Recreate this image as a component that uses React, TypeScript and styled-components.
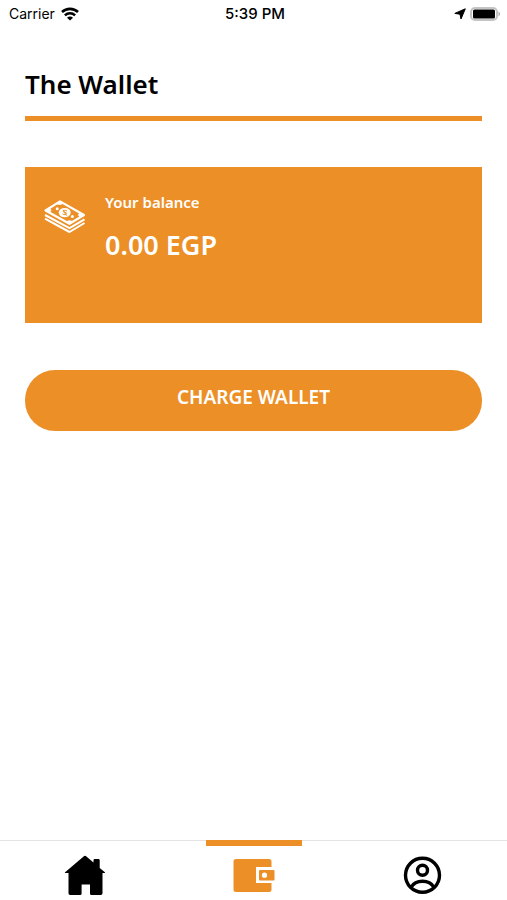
import React from "react";
import styled, { createGlobalStyle } from "styled-components";

const orange = "#ec8f27";

const GlobalStyle = createGlobalStyle`
  *, *::before, *::after { box-sizing: border-box; }
  body {
    margin: 0;
    background: #fff;
    color: #000;
    font-family: "Noto Sans", "Open Sans", sans-serif;
  }
`;

const Screen = styled.div`
  min-height: 100vh;
  display: flex;
  flex-direction: column;
`;

const StatusBar = styled.header`
  display: grid;
  grid-template-columns: 1fr auto 1fr;
  align-items: center;
  height: 28px;
  padding: 0 6px 0 9px;
  font: 400 14px/20px Inter, "Liberation Sans", sans-serif;
`;

const StatusGroup = styled.div<{ $end?: boolean }>`
  display: flex;
  align-items: center;
  gap: ${(p) => (p.$end ? 4 : 6)}px;
  justify-content: ${(p) => (p.$end ? "flex-end" : "flex-start")};
`;

const Clock = styled.time`
  font-size: 15px;
  font-weight: 500;
`;

const Content = styled.main`
  flex: 1;
  display: flex;
  flex-direction: column;
  padding: 36px 25px;
`;

const Title = styled.h1`
  margin: 0;
  padding-bottom: 12px;
  border-bottom: 5px solid ${orange};
  font-size: 26px;
  line-height: 40px;
  font-weight: 600;
`;

const BalanceCard = styled.section`
  display: flex;
  align-items: flex-start;
  gap: 18px;
  min-height: 156px;
  margin-top: 46px;
  padding: 24px 18px;
  background: ${orange};
  color: #fff;
`;

const CashIcon = styled.svg`
  flex: none;
  margin-top: 8px;
`;

const BalanceLabel = styled.p`
  margin: 0;
  font-size: 15px;
  line-height: 22px;
  font-weight: 600;
`;

const BalanceAmount = styled.p`
  margin: 12px 0 0;
  font-size: 27px;
  line-height: 40px;
  font-weight: 600;
`;

const ChargeButton = styled.button`
  height: 61px;
  margin-top: 47px;
  padding: 0 20px 8px;
  border: 0;
  border-radius: 30px;
  background: ${orange};
  color: #fff;
  font: inherit;
  font-size: 19px;
  line-height: 28px;
  font-weight: 600;
  cursor: pointer;
`;

const TabBar = styled.nav`
  display: grid;
  grid-template-columns: repeat(3, 1fr);
  height: 60px;
`;

const Tab = styled.a<{ $active?: boolean }>`
  display: flex;
  flex-direction: column;
  align-items: center;
  border-top: 1px solid #e4e4e4;
  color: ${(p) => (p.$active ? orange : "#000")};

  &::before {
    content: "";
    width: 96px;
    height: 6px;
    margin-top: -1px;
    margin-bottom: 8px;
    background: ${orange};
    visibility: ${(p) => (p.$active ? "visible" : "hidden")};
  }
`;

const Wifi = () => (
  <svg width="18" height="14" viewBox="0 0 18 14" fill="none" stroke="#000" strokeWidth="2.6" role="img" aria-label="Wi-Fi">
    <path d="M1 5C5.4.8 12.6.8 17 5M3.9 8.4c2.9-2.8 7.3-2.8 10.2 0" />
    <path d="M9 13.5 6 10.7c1.6-1.5 4.4-1.5 6 0z" fill="#000" stroke="none" />
  </svg>
);

const LocationArrow = () => (
  <svg width="12" height="12" viewBox="0 0 12 12" role="img" aria-label="Location">
    <path d="M11.3.8 7 11 6 6.2.8 5.4z" stroke="#000" strokeLinejoin="round" />
  </svg>
);

const Battery = () => (
  <svg width="31" height="14" viewBox="0 0 31 14" role="img" aria-label="Battery full">
    <rect x="1" y="1" width="26" height="12" rx="4" fill="#fff" stroke="#c4c4c4" strokeWidth="2" />
    <rect x="3" y="2.5" width="22" height="9" rx="1.5" />
    <path d="M28.5 4.8c2 .7 2 3.7 0 4.4z" fill="#aaa" />
  </svg>
);

const Cash = () => (
  <CashIcon width="44" height="36" viewBox="0 0 44 36" fill="none" stroke="#fff" aria-hidden="true">
    <path d="M2.5 11.5 17 2.4 41 16 26.5 24.8z" strokeWidth="2.2" strokeLinejoin="round" />
    <path d="M2 16 26.5 29.2 41.5 20.3M2 19.7 26.5 33 41.5 24" strokeWidth="2" strokeLinejoin="round" />
    <path d="m2.5 11.5 4-2.4q3 2.2-.2 4.4zM17 2.4l-4 2.4q4 1.5 7.5-.4zM41 16l-4-2.2q-3 2 .2 4.4zM26.5 24.8l-3.8-2.1q3.8-2 7.6 0z" fill="#fff" strokeWidth=".8" />
    <ellipse cx="21.7" cy="13.6" rx="6" ry="4.7" fill="#fff" stroke="none" />
    <path d="M24 12c-1.6-1.3-4.2-.7-3.8.5.4 1.3 3.6.5 3.4 2.1-.2 1.3-2.8 1.4-4 .3M20 10.7l3.5 6" stroke={orange} strokeWidth="1" />
    <circle cx="14.2" cy="9.8" r="1.5" fill="#fff" stroke="none" />
    <circle cx="29.4" cy="17.6" r="1.5" fill="#fff" stroke="none" />
  </CashIcon>
);

const Home = () => (
  <svg width="42" height="42" viewBox="0 0 42 42" fill="currentColor" aria-hidden="true">
    <path d="M19.6 2.4q1.4-1.2 2.8 0l7.1 6.2V6.2q0-1.2 1.2-1.2h3.8q1.2 0 1.2 1.2v7.7l5.2 4.4q.8.8-.3.8h-2.1v20.2q0 1.7-1.7 1.7h-9.3q-1.5 0-1.5-1.5V30.4h-8.4v9.1q0 1.5-1.5 1.5H6.2q-1.7 0-1.7-1.7V19.1H1.4q-1.1 0-.3-.8z" />
  </svg>
);

const Wallet = () => (
  <svg width="42" height="42" viewBox="0 0 42 42" fill="currentColor" aria-hidden="true">
    <path d="M3 5h33q2.5 0 2.5 2.5V13H23v16h15.500v6.500q0 2.500-2.500 2.500H3q-2.500 0-2.500-2.500v-28Q.5 5 3 5z" />
    <path fillRule="evenodd" d="M27 16h13.500q1 0 1 1v8.500q0 1-1 1H27q-1 0-1-1V17q0-1 1-1zm4.500 2.600a2.600 2.600 0 1 0 0 5.200 2.600 2.600 0 0 0 0-5.200z" />
  </svg>
);

const Account = () => (
  <svg width="42" height="42" viewBox="0 0 42 42" fill="none" stroke="currentColor" strokeWidth="3.4" aria-hidden="true">
    <circle cx="20.500" cy="21.300" r="17" />
    <circle cx="20.500" cy="16.300" r="5" />
    <path d="M9 33.300c4.800-8 18.200-8 23 0" />
  </svg>
);

export default function App() {
  return (
    <Screen>
      <GlobalStyle />
      <StatusBar>
        <StatusGroup>
          <span>Carrier</span>
          <Wifi />
        </StatusGroup>
        <Clock>5:39 PM</Clock>
        <StatusGroup $end>
          <LocationArrow />
          <Battery />
        </StatusGroup>
      </StatusBar>
      <Content>
        <Title>The Wallet</Title>
        <BalanceCard>
          <Cash />
          <div>
            <BalanceLabel>Your balance</BalanceLabel>
            <BalanceAmount>0.00 EGP</BalanceAmount>
          </div>
        </BalanceCard>
        <ChargeButton type="button">CHARGE WALLET</ChargeButton>
      </Content>
      <TabBar aria-label="Main">
        <Tab href="#home" aria-label="Home"><Home /></Tab>
        <Tab href="#wallet" aria-label="Wallet" aria-current="page" $active><Wallet /></Tab>
        <Tab href="#account" aria-label="Account"><Account /></Tab>
      </TabBar>
    </Screen>
  );
}
